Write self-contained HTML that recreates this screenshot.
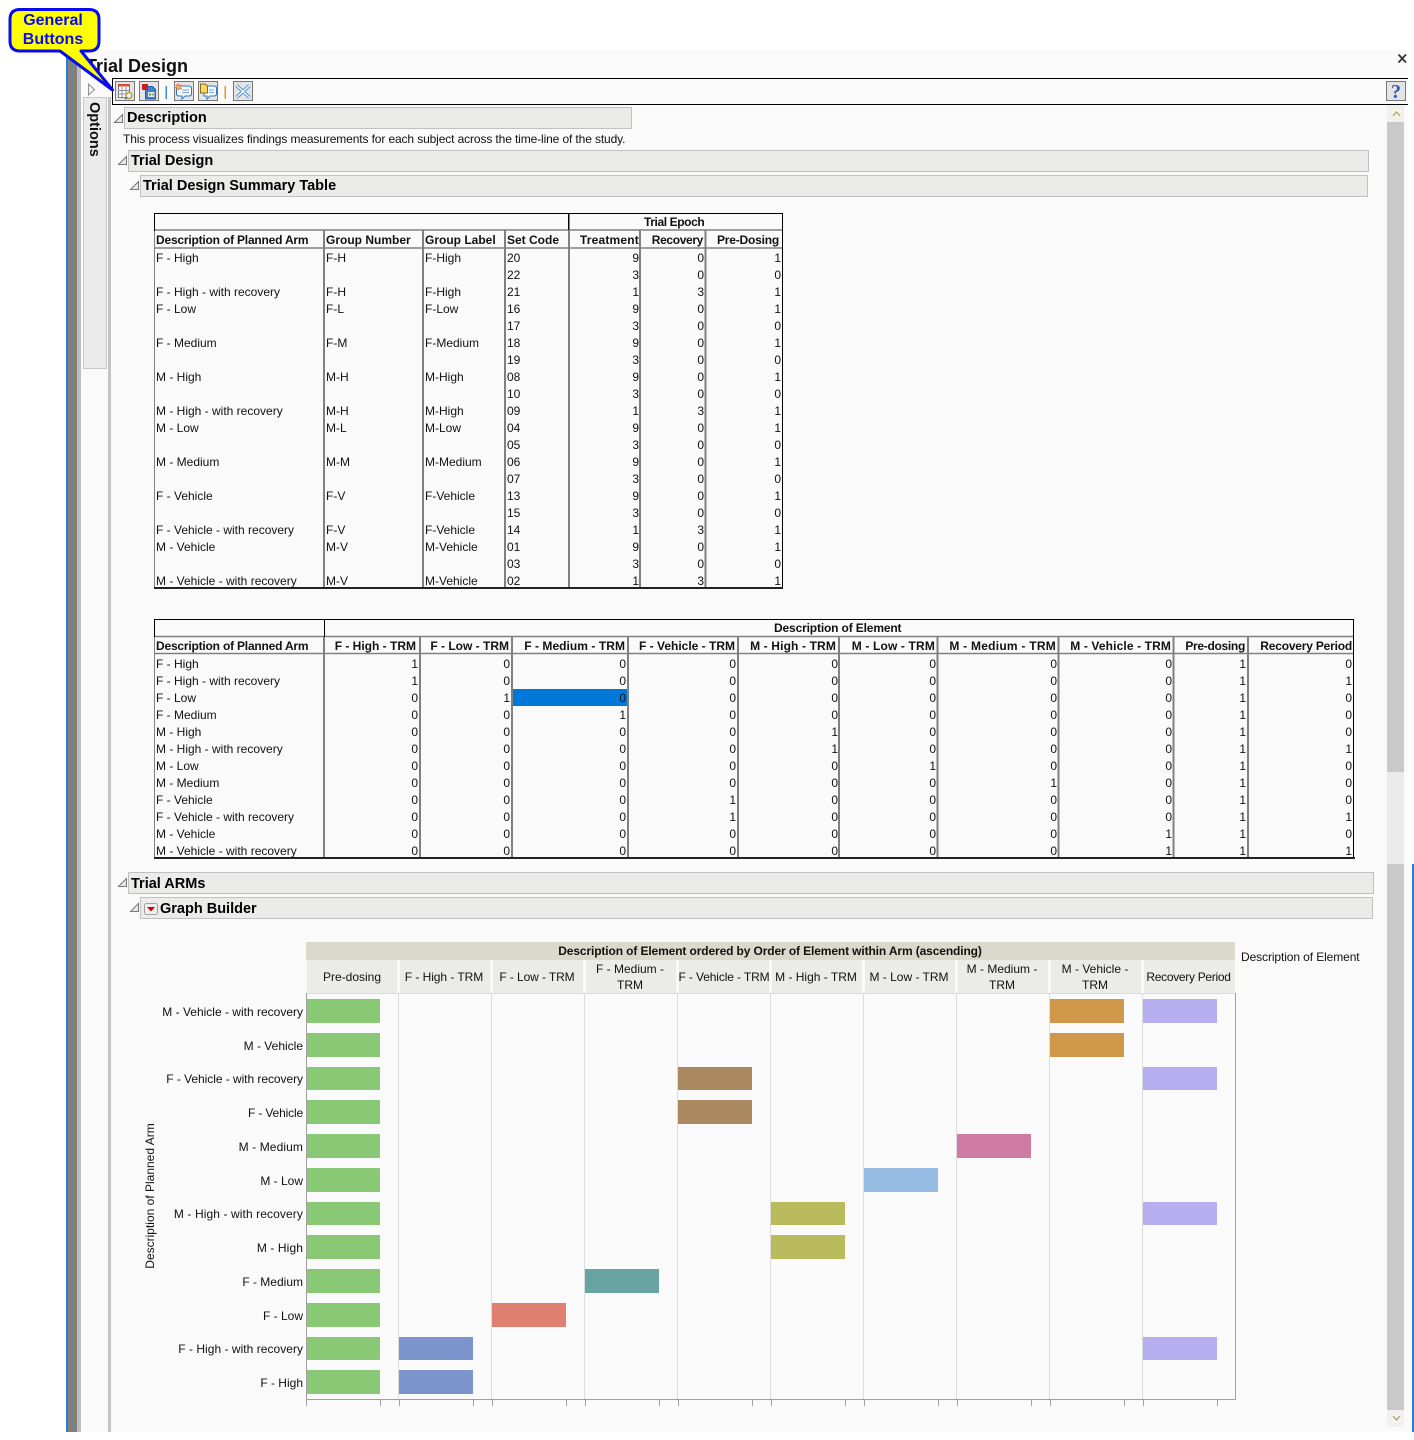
<!DOCTYPE html>
<html><head><meta charset="utf-8">
<style>
html,body{margin:0;padding:0;background:#fff}
body{position:relative;width:1414px;height:1440px;overflow:hidden;font-family:"Liberation Sans",Arial,sans-serif;font-size:12px;color:#111}
svg{position:absolute;left:0;top:0}
svg text{font-family:"Liberation Sans",Arial,sans-serif;font-size:12px;fill:#111}
.a{position:absolute;white-space:pre}
.c{position:absolute;white-space:pre;line-height:17px}
.r{position:absolute;white-space:pre;line-height:17px;width:100px;text-align:right}
.h{position:absolute;white-space:pre;font-weight:bold;line-height:18px}
.hr{width:140px;text-align:right}
.o{position:absolute;white-space:pre;font-weight:bold;font-size:14.5px;line-height:21px;color:#000}
</style></head>
<body>
<svg width="1414" height="1440" viewBox="0 0 1414 1440">
<rect x="66" y="50" width="1342" height="1382" fill="#fafafa"/>
<rect x="1408" y="864" width="6" height="568" fill="#fafafa"/>
<rect x="66" y="50" width="2" height="1382" fill="#2d7ad6"/>
<rect x="68" y="50" width="9" height="1382" fill="#808080"/>
<rect x="77" y="50" width="4" height="1382" fill="#bdbdbd"/>
<rect x="108" y="97" width="3" height="1335" fill="#c4c4c4"/>
<rect x="1412" y="864" width="2" height="568" fill="#2d7ad6"/>
<!-- options -->
<path d="M88.5 84v11l6-5.500z" fill="#f4f4f4" stroke="#909090"/>
<rect x="83.500" y="97.500" width="23" height="271" fill="#ebebeb" stroke="#c8c8c8"/>
<!-- toolbar -->
<path d="M112.500 104.500V78.500H1408M112 104.500H1408" fill="none" stroke="#000"/>
<g fill="#e4e4e4" stroke="#777">
<rect x="115.500" y="81.500" width="19" height="19"/>
<rect x="139.500" y="81.500" width="19" height="19"/>
<rect x="174.500" y="81.500" width="19" height="19"/>
<rect x="198.500" y="81.500" width="19" height="19"/>
<rect x="233.500" y="81.500" width="19" height="19"/>
<rect x="1386.500" y="81.500" width="19" height="19"/>
</g>
<rect x="165.500" y="86" width="1.500" height="13" fill="#3f8fd0"/>
<rect x="224.500" y="86" width="1.500" height="13" fill="#e09a30"/>
<!-- icon 1 -->
<rect x="118.500" y="84.500" width="11" height="13" fill="#fff" stroke="#8a7a70"/>
<rect x="118" y="84" width="12" height="2.500" fill="#c8503c"/>
<path d="M118 90.500h12M118 94h8M122 87v11M126 87v7" stroke="#8a8aa0" fill="none"/>
<circle cx="129" cy="95.500" r="3" fill="#e8f4ff" stroke="#c09020" stroke-width="1.300"/>
<path d="M127 97.500l-2 1.500" stroke="#3078c0" stroke-width="1.500"/>
<!-- icon 2 -->
<path d="M145.500 86.500h7l3 3v9.500h-10z" fill="#3f7fd0" stroke="#1f5fa8"/>
<rect x="142" y="84" width="6" height="6" fill="#c81e1e"/>
<rect x="148" y="92" width="6.500" height="5" fill="#d8e8f8"/>
<rect x="149" y="93.500" width="2" height="2" fill="#50a050"/><rect x="152" y="93.500" width="2" height="2" fill="#c8a030"/>
<!-- icon 3 -->
<path d="M179 86h10q2.500 0 2.500 2.500v5q0 2.500-2.500 2.500h-4l-3 3v-3h-3q-2.500 0-2.500-2.500v-5q0-2.500 2.500-2.500z" fill="#f4faff" stroke="#3078c0"/>
<path d="M182 90h7M182 92.500h7" stroke="#7aa8d8" fill="none"/>
<path d="M178.500 83.500l.8 2 2-.4-1 1.800 1.200 1.800-2.200-.3-1 1.800-.8-2-2-.4 1.600-1.400-.6-2 1.800 1z" fill="#f6c040" stroke="#e06030" stroke-width=".6"/>
<!-- icon 4 -->
<path d="M204 86h10q2.500 0 2.500 2.500v5q0 2.500-2.500 2.500h-4l-3 3v-3h-3z" fill="#f4faff" stroke="#3078c0"/>
<path d="M209 90h5M209 92.500h5" stroke="#7aa8d8" fill="none"/>
<path d="M200.500 84h5l2 2v7h-7z" fill="#f8d860" stroke="#8a6a20"/>
<!-- icon 5 -->
<path d="M236.500 85.500l13 12M249.500 85.500l-13 12" fill="none" stroke="#4a88d0" stroke-width="3.400"/>
<path d="M236.500 85.500l13 12M249.500 85.500l-13 12" fill="none" stroke="#e6f1fb" stroke-width="1.600"/>
<!-- scrollbar -->
<rect x="1387" y="105" width="17" height="17" fill="#f0f0f0"/>
<rect x="1387" y="122" width="17" height="650" fill="#c9c9c9"/>
<rect x="1387" y="772" width="17" height="92" fill="#ebebeb"/>
<rect x="1387" y="864" width="17" height="546" fill="#c9c9c9"/>
<rect x="1387" y="1410" width="17" height="17" fill="#f0f0f0"/>
<rect x="1392" y="110" width="9" height="7" fill="#fbfbdc"/>
<path d="M1393 116l3.500-4 3.500 4" fill="none" stroke="#a8a8a8" stroke-width="1.500"/>
<rect x="1392" y="1415" width="9" height="7" fill="#fbfbdc"/>
<path d="M1393 1416l3.500 4 3.500-4" fill="none" stroke="#a8a8a8" stroke-width="1.500"/>
<!-- outline boxes -->
<g fill="#ebebe9" stroke="#c0c0c0">
<rect x="124.500" y="107.500" width="507" height="21"/>
<rect x="128.500" y="150.500" width="1240" height="21"/>
<rect x="140.500" y="175.500" width="1227" height="21"/>
<rect x="128.500" y="872.500" width="1245" height="21"/>
<rect x="140.500" y="897.500" width="1232" height="21"/>
</g>
<g fill="#e8e8e8" stroke="#777">
<path d="M114.500 122.500h8v-8z"/>
<path d="M118.500 164.500h8v-8z"/>
<path d="M130.500 189.500h8v-8z"/>
<path d="M118.500 886.500h8v-8z"/>
<path d="M130.500 911.500h8v-8z"/>
</g>
<rect x="144.500" y="903.500" width="13" height="11" rx="2" fill="#f0f0f0" stroke="#a0a0a0"/>
<path d="M147 907h8l-4 4.500z" fill="#d40000"/>
<!-- table 1 -->
<rect x="512" y="689" width="115" height="17" fill="#0078d7"/>
<g fill="none" stroke="#808080" stroke-width="2">
<path d="M154 230H782M154 248H782" stroke-width="1.500"/>
<path d="M324 230V588M423 230V588M505 230V588M569 214V588M640 230V588M705.500 230V588"/>
<path d="M154.500 230V588" stroke-width="1"/>
</g>
<path d="M154.500 231V214M154 213.500H783M782.500 213V588" stroke="#000" fill="none"/>
<path d="M568.500 213V230" stroke="#000"/>
<path d="M154 588H783" stroke="#222" stroke-width="2" fill="none"/>
<!-- table 2 -->
<g fill="none" stroke="#808080" stroke-width="2">
<path d="M154 636.500H1354M154 653.500H1354" stroke-width="1.500"/>
<path d="M324 636V858M420 636V858M512 636V858M628 636V858M738 636V858M839 636V858M937.500 636V858M1058.500 636V858M1173.500 636V858M1248 636V858"/>
<path d="M154.500 636V858" stroke-width="1"/>
</g>
<path d="M154.500 637V619.500H1353.500V858M324.500 619V637" stroke="#000" fill="none"/>
<path d="M154 858H1355" stroke="#222" stroke-width="2" fill="none"/>
<!-- graph -->
<rect x="306" y="942" width="929" height="18" fill="#dbd9cc"/>
<g fill="#ebebe8">
<rect x="307" y="960" width="90" height="33"/>
<rect x="400" y="960" width="90" height="33"/>
<rect x="493" y="960" width="90" height="33"/>
<rect x="586" y="960" width="90" height="33"/>
<rect x="679" y="960" width="90" height="33"/>
<rect x="772" y="960" width="90" height="33"/>
<rect x="865" y="960" width="90" height="33"/>
<rect x="958" y="960" width="90" height="33"/>
<rect x="1051" y="960" width="90" height="33"/>
<rect x="1144" y="960" width="91" height="33"/>
</g>
<path d="M306 993.500H1235" stroke="#dcdcd4"/>
<path d="M398.500 993V1399M491.500 993V1399M584.500 993V1399M677.500 993V1399M770.500 993V1399M863.500 993V1399M956.500 993V1399M1049.500 993V1399M1142.500 993V1399" stroke="#dcdcdc"/>
<path d="M306.500 993V1406M1235.500 993V1399M306 1399.500H1236" stroke="#a0a0a0" fill="none"/>
<path d="M380.500 1399v7M399.500 1399v7M473.500 1399v7M492.500 1399v7M566.500 1399v7M585.500 1399v7M659.500 1399v7M678.500 1399v7M752.500 1399v7M771.500 1399v7M845.500 1399v7M864.500 1399v7M938.500 1399v7M957.500 1399v7M1031.500 1399v7M1050.500 1399v7M1124.500 1399v7M1143.500 1399v7M1217.500 1399v7" stroke="#a0a0a0"/>
<g fill="#89c875">
<rect x="307" y="999" width="73" height="24"/><rect x="307" y="1033" width="73" height="24"/><rect x="307" y="1067" width="73" height="23"/><rect x="307" y="1100" width="73" height="24"/><rect x="307" y="1134" width="73" height="24"/><rect x="307" y="1168" width="73" height="24"/><rect x="307" y="1202" width="73" height="23"/><rect x="307" y="1235" width="73" height="24"/><rect x="307" y="1269" width="73" height="24"/><rect x="307" y="1303" width="73" height="24"/><rect x="307" y="1337" width="73" height="23"/><rect x="307" y="1370" width="73" height="24"/>
</g>
<g fill="#b7aeef">
<rect x="1143" y="999" width="74" height="24"/><rect x="1143" y="1067" width="74" height="23"/><rect x="1143" y="1202" width="74" height="23"/><rect x="1143" y="1337" width="74" height="23"/>
</g>
<rect x="1050" y="999" width="74" height="24" fill="#ce9749"/><rect x="1050" y="1033" width="74" height="24" fill="#ce9749"/>
<rect x="678" y="1067" width="74" height="23" fill="#aa8860"/><rect x="678" y="1100" width="74" height="24" fill="#aa8860"/>
<rect x="957" y="1134" width="74" height="24" fill="#cf7aa3"/>
<rect x="864" y="1168" width="74" height="24" fill="#96bce4"/>
<rect x="771" y="1202" width="74" height="23" fill="#b9bb5c"/><rect x="771" y="1235" width="74" height="24" fill="#b9bb5c"/>
<rect x="585" y="1269" width="74" height="24" fill="#69a3a3"/>
<rect x="492" y="1303" width="74" height="24" fill="#e08070"/>
<rect x="399" y="1337" width="74" height="23" fill="#7c94cc"/><rect x="399" y="1370" width="74" height="24" fill="#7c94cc"/>
<text x="770" y="955" text-anchor="middle" style="font-weight:bold;letter-spacing:-.12px">Description of Element ordered by Order of Element within Arm (ascending)</text>
<g text-anchor="middle">
<text x="352" y="981">Pre-dosing</text>
<text x="444" y="981" style="letter-spacing:-.05px">F - High - TRM</text>
<text x="537" y="981" style="letter-spacing:-.1px">F - Low - TRM</text>
<text x="630" y="973">F - Medium -</text><text x="630" y="989">TRM</text>
<text x="724" y="981" style="letter-spacing:-.12px">F - Vehicle - TRM</text>
<text x="816" y="981">M - High - TRM</text>
<text x="909" y="981">M - Low - TRM</text>
<text x="1002" y="973">M - Medium -</text><text x="1002" y="989">TRM</text>
<text x="1095" y="973">M - Vehicle -</text><text x="1095" y="989">TRM</text>
<text x="1188.500" y="981" style="letter-spacing:-.3px">Recovery Period</text>
</g>
<text x="1241" y="961" style="letter-spacing:-.1px">Description of Element</text>
<g text-anchor="end">
<text x="303" y="1016">M - Vehicle - with recovery</text>
<text x="303" y="1050">M - Vehicle</text>
<text x="303" y="1083" style="letter-spacing:-.05px">F - Vehicle - with recovery</text>
<text x="303" y="1117" style="letter-spacing:-.15px">F - Vehicle</text>
<text x="303" y="1151" style="letter-spacing:.1px">M - Medium</text>
<text x="303" y="1185">M - Low</text>
<text x="303" y="1218" style="letter-spacing:.1px">M - High - with recovery</text>
<text x="303" y="1252" style="letter-spacing:.1px">M - High</text>
<text x="303" y="1286">F - Medium</text>
<text x="303" y="1320">F - Low</text>
<text x="303" y="1353" style="letter-spacing:.03px">F - High - with recovery</text>
<text x="303" y="1387">F - High</text>
</g>
<text transform="translate(154 1196) rotate(-90)" text-anchor="middle">Description of Planned Arm</text>
<text x="1396" y="98" text-anchor="middle" style="font-size:20px;font-weight:bold;fill:#2a5cc0;font-family:'Liberation Serif',serif">?</text>
<path d="M1398.500 54.500l7.500 8M1406 54.500l-7.500 8" stroke="#333" stroke-width="1.800"/>
</svg>

<div class="a" style="left:86px;top:55px;font-size:18px;font-weight:bold;line-height:22px;color:#111">Trial Design</div>
<div class="o" style="left:127px;top:108px">Description</div>
<div class="a" style="left:123px;top:131px;line-height:16px;letter-spacing:-.12px">This process visualizes findings measurements for each subject across the time-line of the study.</div>
<div class="o" style="left:131px;top:151px">Trial Design</div>
<div class="o" style="left:143px;top:176px">Trial Design Summary Table</div>
<div class="o" style="left:131px;top:874px">Trial ARMs</div>
<div class="o" style="left:160px;top:899px">Graph Builder</div>
<div class="a" style="left:86px;top:102px;font-size:14.5px;font-weight:bold;line-height:16px;transform-origin:0 0;transform:translate(16px,0) rotate(90deg)">Options</div>

<!-- Table 1 headers -->
<div class="h" style="left:156px;top:231px;letter-spacing:-.2px">Description of Planned Arm</div>
<div class="h" style="left:326px;top:231px">Group Number</div>
<div class="h" style="left:425px;top:231px">Group Label</div>
<div class="h" style="left:507px;top:231px">Set Code</div>
<div class="h" style="left:644px;top:213px;letter-spacing:-.4px">Trial Epoch</div>
<div class="h hr" style="left:499px;top:231px;letter-spacing:.2px">Treatment</div>
<div class="h hr" style="left:563px;top:231px;letter-spacing:-.35px">Recovery</div>
<div class="h hr" style="left:639px;top:231px;letter-spacing:-.2px">Pre-Dosing</div>
<div class="c" style="left:156px;top:250px">F - High

F - High - with recovery
F - Low

F - Medium

M - High

M - High - with recovery
M - Low

M - Medium

F - Vehicle

F - Vehicle - with recovery
M - Vehicle

M - Vehicle - with recovery</div>
<div class="c" style="left:326px;top:250px">F-H

F-H
F-L

F-M

M-H

M-H
M-L

M-M

F-V

F-V
M-V

M-V</div>
<div class="c" style="left:425px;top:250px">F-High

F-High
F-Low

F-Medium

M-High

M-High
M-Low

M-Medium

F-Vehicle

F-Vehicle
M-Vehicle

M-Vehicle</div>
<div class="c" style="left:507px;top:250px">20
22
21
16
17
18
19
08
10
09
04
05
06
07
13
15
14
01
03
02</div>
<div class="r" style="left:539px;top:250px">9
3
1
9
3
9
3
9
3
1
9
3
9
3
9
3
1
9
3
1</div>
<div class="r" style="left:604px;top:250px">0
0
3
0
0
0
0
0
0
3
0
0
0
0
0
0
3
0
0
3</div>
<div class="r" style="left:681px;top:250px">1
0
1
1
0
1
0
1
0
1
1
0
1
0
1
0
1
1
0
1</div>

<!-- Table 2 headers -->
<div class="h" style="left:774px;top:619px;letter-spacing:-.15px">Description of Element</div>
<div class="h" style="left:156px;top:637px;letter-spacing:-.2px">Description of Planned Arm</div>
<div class="h hr" style="left:276px;top:637px">F - High - TRM</div>
<div class="h hr" style="left:369px;top:637px">F - Low - TRM</div>
<div class="h hr" style="left:485px;top:637px;letter-spacing:.05px">F - Medium - TRM</div>
<div class="h hr" style="left:595px;top:637px">F - Vehicle - TRM</div>
<div class="h hr" style="left:696px;top:637px;letter-spacing:.14px">M - High - TRM</div>
<div class="h hr" style="left:795px;top:637px;letter-spacing:.15px">M - Low - TRM</div>
<div class="h hr" style="left:916px;top:637px;letter-spacing:.25px">M - Medium - TRM</div>
<div class="h hr" style="left:1031px;top:637px;letter-spacing:.12px">M - Vehicle - TRM</div>
<div class="h hr" style="left:1105px;top:637px;letter-spacing:-.3px">Pre-dosing</div>
<div class="h hr" style="left:1212px;top:637px;letter-spacing:-.2px">Recovery Period</div>
<div class="c" style="left:156px;top:655.500px">F - High
F - High - with recovery
F - Low
F - Medium
M - High
M - High - with recovery
M - Low
M - Medium
F - Vehicle
F - Vehicle - with recovery
M - Vehicle
M - Vehicle - with recovery</div>
<div class="r" style="left:318px;top:655.500px">1
1
0
0
0
0
0
0
0
0
0
0</div>
<div class="r" style="left:410px;top:655.500px">0
0
1
0
0
0
0
0
0
0
0
0</div>
<div class="r" style="left:526px;top:655.500px">0
0
0
1
0
0
0
0
0
0
0
0</div>
<div class="r" style="left:636px;top:655.500px">0
0
0
0
0
0
0
0
1
1
0
0</div>
<div class="r" style="left:738px;top:655.500px">0
0
0
0
1
1
0
0
0
0
0
0</div>
<div class="r" style="left:836px;top:655.500px">0
0
0
0
0
0
1
0
0
0
0
0</div>
<div class="r" style="left:957px;top:655.500px">0
0
0
0
0
0
0
1
0
0
0
0</div>
<div class="r" style="left:1072px;top:655.500px">0
0
0
0
0
0
0
0
0
0
1
1</div>
<div class="r" style="left:1146px;top:655.500px">1
1
1
1
1
1
1
1
1
1
1
1</div>
<div class="r" style="left:1252px;top:655.500px">0
1
0
0
0
1
0
0
0
1
0
1</div>

<!-- callout -->
<svg width="130" height="100" viewBox="0 0 130 100">
<path d="M20 9.500H89Q99 9.500 99 19.500V41Q99 51 89 51H81L112.500 90L60 51H20Q10 51 10 41V19.500Q10 9.500 20 9.500Z" fill="#ffff00" stroke="#0a0aee" stroke-width="3" stroke-linejoin="round"/>
<text x="53" y="25" text-anchor="middle" style="font-size:16px;font-weight:bold;fill:#0a0aee">General</text>
<text x="53" y="44" text-anchor="middle" style="font-size:16px;font-weight:bold;fill:#0a0aee">Buttons</text>
</svg>
</body></html>
